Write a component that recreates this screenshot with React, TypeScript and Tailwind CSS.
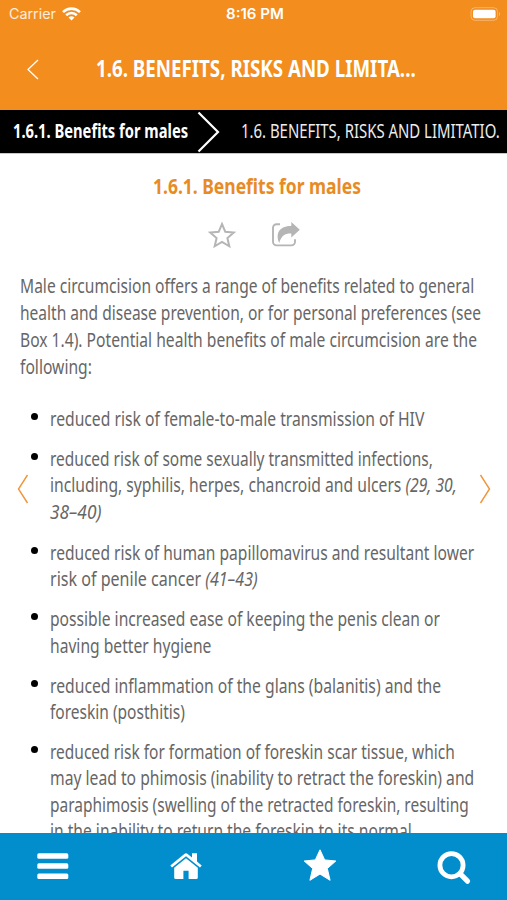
import { useLayoutEffect, useRef, useState } from 'react'
import type { ReactNode } from 'react'

type LineProps = {
  width: number
  className?: string
  children: ReactNode
}

// One line of condensed text, fitted to the given width
const Line = ({ width, className = '', children }: LineProps) => {
  const ref = useRef<HTMLSpanElement>(null)
  const [scale, setScale] = useState(1)

  useLayoutEffect(() => {
    if (ref.current) setScale(width / ref.current.offsetWidth)
  }, [width])

  return (
    <span className={`block whitespace-nowrap ${className}`} style={{ width }}>
      <span ref={ref} className="inline-block origin-left align-top" style={{ transform: `scaleX(${scale})` }}>
        {children}
      </span>
    </span>
  )
}

const intro = [
  { text: 'Male circumcision offers a range of benefits related to general', width: 454 },
  { text: 'health and disease prevention, or for personal preferences (see', width: 461 },
  { text: 'Box 1.4). Potential health benefits of male circumcision are the', width: 457 },
  { text: 'following:', width: 72 },
]

const benefits: { text: ReactNode; width: number }[][] = [
  [{ text: 'reduced risk of female-to-male transmission of HIV', width: 374 }],
  [
    { text: 'reduced risk of some sexually transmitted infections,', width: 383 },
    { text: <>including, syphilis, herpes, chancroid and ulcers <em>(29, 30,</em></>, width: 407 },
    { text: <em>38–40)</em>, width: 51 },
  ],
  [
    { text: 'reduced risk of human papillomavirus and resultant lower', width: 424 },
    { text: <>risk of penile cancer <em>(41–43)</em></>, width: 208 },
  ],
  [
    { text: 'possible increased ease of keeping the penis clean or', width: 390 },
    { text: 'having better hygiene', width: 161 },
  ],
  [
    { text: 'reduced inflammation of the glans (balanitis) and the', width: 391 },
    { text: 'foreskin (posthitis)', width: 135 },
  ],
  [
    { text: 'reduced risk for formation of foreskin scar tissue, which', width: 405 },
    { text: 'may lead to phimosis (inability to retract the foreskin) and', width: 424 },
    { text: 'paraphimosis (swelling of the retracted foreskin, resulting', width: 419 },
    { text: 'in the inability to return the foreskin to its normal', width: 362 },
  ],
]

const StatusBar = () => (
  <div className="flex h-[27px] items-center justify-between pl-[9px] pr-[6px] font-['Inter','Liberation_Sans',sans-serif] text-white">
    <div className="flex flex-1 items-center gap-[6px]">
      <Line width={47} className="text-[14px] leading-[27px] text-white/85">Carrier</Line>
      <svg className="h-[14px] w-[19px]" viewBox="0 0 19 14" fill="none" stroke="currentColor" strokeWidth="2.6">
        <path d="M1 5.1a12.2 12.2 0 0 1 17 0" />
        <path d="M4.2 8.2a7.6 7.6 0 0 1 10.6 0" />
        <path d="M9.5 13.6 6.5 10.6a4.3 4.3 0 0 1 6 0Z" fill="currentColor" stroke="none" />
      </svg>
    </div>
    <Line width={58} className="text-[14px] font-semibold leading-[27px]">8:16 PM</Line>
    <div className="flex flex-1 justify-end">
      <svg className="h-[14px] w-[31px]" viewBox="0 0 31 14">
        <rect x="1" y="0.7" width="26.6" height="12.6" rx="4" fill="none" stroke="white" strokeOpacity="0.35" />
        <rect x="3" y="2.7" width="22.6" height="8.6" rx="2" fill="white" />
        <path d="M29 5v4c1.4-.6 1.4-3.4 0-4Z" fill="white" fillOpacity="0.4" />
      </svg>
    </div>
  </div>
)

const App = () => {
  return (
    <div className="flex h-[900px] w-[507px] flex-col overflow-hidden bg-white font-['Noto_Sans','Open_Sans',sans-serif] [font-stretch:75%]">
      <header className="h-[110px] shrink-0 bg-[#f28d1e] text-white">
        <StatusBar />
        <div className="flex h-[83px] items-center">
          <svg className="ml-[26px] h-[22px] w-[14px]" viewBox="0 0 14 22" fill="none" stroke="currentColor" strokeWidth="1.3">
            <path d="M12 2 2 11.500 12 21" />
          </svg>
          <h1 className="ml-[56px] pb-px">
            <Line width={320} className="text-[24px] font-bold leading-[32px]">1.6. BENEFITS, RISKS AND LIMITA...</Line>
          </h1>
        </div>
      </header>

      <nav className="flex h-[44px] shrink-0 items-center border-b border-[#c8c8c8] bg-black pl-[13px] text-[19px] text-white">
        <Line width={175} className="font-bold leading-[43px]">1.6.1. Benefits for males</Line>
        <svg className="ml-[9px] h-[42px] w-[24px]" viewBox="0 0 24 42" fill="none" stroke="currentColor" strokeWidth="2.2">
          <path d="M1.5 1.5 21 21 1.5 40.5" />
        </svg>
        <Line width={259} className="ml-[20px] leading-[43px] text-[#ececec]">1.6. BENEFITS, RISKS AND LIMITATIO.</Line>
      </nav>

      <div className="relative min-h-0 flex-1 overflow-hidden">
        <h2 className="flex justify-center pl-[6px] pt-[18px] text-[#e88b24]">
          <Line width={208} className="text-[21px] font-bold leading-[28px]">1.6.1. Benefits for males</Line>
        </h2>

        <div className="mt-[20px] flex h-[32px] items-start pl-[207px] text-[#b5b5b5]">
          <svg className="mt-px h-[28px] w-[30px]" viewBox="0 0 30 28" fill="none" stroke="currentColor" strokeWidth="2">
            <path d="m15 3 3.300 7.800 8.500.8-6.400 5.500 1.900 8.200-7.300-4.300-7.300 4.300 1.900-8.200-6.400-5.500 8.500-.8Z" />
          </svg>
          <svg className="ml-[34px] mt-px h-[28px] w-[30px]" viewBox="0 0 30 28">
            <path d="M9 3.200H5.6A3.6 3.6 0 0 0 2 6.800v14A3.600 3.600 0 0 0 5.600 24.400h14.800a3.600 3.600 0 0 0 3.600-3.600v-2.500" fill="none" stroke="currentColor" strokeWidth="1.9" />
            <path d="M20.300 1 28.800 8.800 20.300 16.500v-4C14 12.300 10.500 14.500 8.200 22 3.800 11.500 9.500 4.800 20.300 5Z" fill="currentColor" />
          </svg>
        </div>

        <div className="pl-[19.5px] pt-[21px] text-[20px] leading-[26.9px] text-[#666]">
          {intro.map((line) => (
            <Line key={line.text} width={line.width}>{line.text}</Line>
          ))}
        </div>

        <ul className="mt-[25px] flex flex-col gap-[13.3px] pl-[31px] text-[20px] leading-[26.6px] text-[#666]">
          {benefits.map((lines, i) => (
            <li key={i} className="flex last:-mt-[0.8px] [&:nth-child(3)]:mt-[1.3px]">
              <span className="mt-[7px] h-[7px] w-[7px] shrink-0 rounded-full bg-black" />
              <div className="ml-[12px]">
                {lines.map((line, j) => (
                  <Line key={j} width={line.width}>{line.text}</Line>
                ))}
              </div>
            </li>
          ))}
        </ul>

        <button className="absolute left-[16px] top-[319px] text-[#f0953a]">
          <svg className="h-[32px] w-[13px]" viewBox="0 0 13 32" fill="none" stroke="currentColor" strokeWidth="1.4">
            <path d="M11.5 2 2.5 16l9 14" />
          </svg>
        </button>
        <button className="absolute right-[15px] top-[319px] text-[#f0953a]">
          <svg className="h-[32px] w-[13px]" viewBox="0 0 13 32" fill="none" stroke="currentColor" strokeWidth="1.4">
            <path d="M1.5 2 10.5 16l-9 14" />
          </svg>
        </button>
      </div>

      <footer className="flex h-[67px] shrink-0 items-start bg-[#028ecc] text-white">
        <svg className="ml-[37px] mt-[20px] h-[26px] w-[32px]" viewBox="0 0 32 26" fill="currentColor">
          <rect x="0.3" y="0.2" width="31" height="5.6" rx="1.5" />
          <rect x="0.3" y="10.2" width="31" height="5.6" rx="1.5" />
          <rect x="0.3" y="20.4" width="31" height="5.6" rx="1.5" />
        </svg>
        <svg className="ml-[101px] mt-[19px] h-[28px] w-[32px]" viewBox="0 0 32 28" fill="currentColor">
          <path d="M4.2 15.800 16 6.200l11.800 9.600v9.700a1.500 1.500 0 0 1-1.500 1.500h-7.700v-8.200h-5.200V27H5.700a1.500 1.500 0 0 1-1.500-1.500Z" />
          <path d="M.3 13.500 14.300 1.900a2.700 2.700 0 0 1 3.400 0L22 5.500V1.300h5v8.300l4.700 3.900-1.700 2.100L16 4.200 2 15.600Z" />
        </svg>
        <svg className="ml-[101px] mt-[15px] h-[34px] w-[34px]" viewBox="0 0 34 34" fill="currentColor" stroke="currentColor" strokeWidth="1" strokeLinejoin="round">
          <path d="m17 1.800 4.700 10.100 11.100 1.100-8.500 7.500 2.800 11.800-10.100-6.200-10.100 6.200 2.800-11.800L1.200 13l11.100-1.100Z" />
        </svg>
        <svg className="ml-[100px] mt-[17px] h-[36px] w-[36px]" viewBox="0 0 36 36" fill="none" stroke="currentColor">
          <circle cx="14.500" cy="15.200" r="11.600" strokeWidth="4.800" />
          <path d="m23 23.700 7.500 7.500" strokeWidth="5.200" strokeLinecap="round" />
        </svg>
      </footer>
    </div>
  )
}

export default App
